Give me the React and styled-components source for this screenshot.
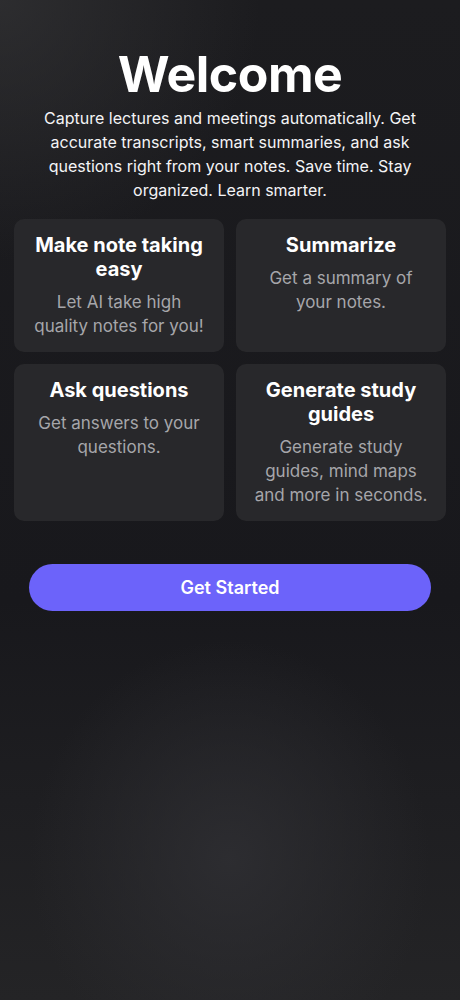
import React from 'react'
import styled, {createGlobalStyle} from 'styled-components'

const GlobalStyle = createGlobalStyle`
  html, body {
    margin: 0;
    padding: 0;
    background: #19191d;
  }
  body {
    font-family: Inter, "Noto Sans", "Liberation Sans", sans-serif;
    -webkit-font-smoothing: antialiased;
  }
`

const Screen = styled.div`
  min-height: 1000px;
  box-sizing: border-box;
  padding: 44px 14px 40px;
  display: flex;
  flex-direction: column;
  align-items: center;
  color: #fff;
  background:
    radial-gradient(ellipse 200px 220px at 230px 860px, rgba(46, 46, 50, 0.9) 0%, rgba(46, 46, 50, 0) 100%),
    radial-gradient(ellipse 260px 260px at 0px 0px, rgba(52, 52, 54, 0.7) 0%, rgba(52, 52, 54, 0) 100%),
    linear-gradient(to bottom, #1c1c1f 0%, #18181c 60%, #242426 100%);
`

const Title = styled.h1`
  margin: 0;
  font-size: 50px;
  line-height: 60px;
  font-weight: 700;
  letter-spacing: -0.5px;
`

const Intro = styled.p`
  margin: 2px 0 0;
  padding: 0 20px;
  font-size: 16px;
  line-height: 24px;
  text-align: center;
  color: #f4f4f6;
`

const Grid = styled.div`
  margin-top: 17px;
  width: 100%;
  display: grid;
  grid-template-columns: 1fr 1fr;
  gap: 12px;
`

const Card = styled.div`
  background: #28282b;
  border-radius: 10px;
  padding: 14px 16px;
  min-height: ${props => props.tall ? 157 : 133}px;
  box-sizing: border-box;
  text-align: center;
`

const CardTitle = styled.div`
  font-size: 20px;
  line-height: 24px;
  font-weight: 700;
  color: #fff;
  margin: 0 -6px;
`

const CardText = styled.div`
  margin-top: 9px;
  font-size: 17px;
  line-height: 24px;
  color: #a6a6aa;
`

const StartButton = styled.button`
  margin-top: 43px;
  width: 402px;
  height: 47px;
  border: none;
  border-radius: 24px;
  background: #6c63fa;
  color: #fff;
  font-family: inherit;
  font-size: 18px;
  font-weight: 600;
  cursor: pointer;
`

const features = [
  {title: 'Make note taking easy', text: 'Let AI take high quality notes for you!'},
  {title: 'Summarize', text: 'Get a summary of your notes.'},
  {title: 'Ask questions', text: 'Get answers to your questions.', tall: true},
  {title: 'Generate study guides', text: 'Generate study guides, mind maps and more in seconds.', tall: true}
]

export default function App () {
  return <Screen>
    <GlobalStyle />
    <Title>Welcome</Title>
    <Intro>
      Capture lectures and meetings automatically. Get accurate transcripts, smart summaries, and ask questions right from your notes. Save time. Stay organized. Learn smarter.
    </Intro>
    <Grid>
      {
        features.map(f => <Card key={f.title} tall={f.tall}>
          <CardTitle>{f.title}</CardTitle>
          <CardText>{f.text}</CardText>
        </Card>)
      }
    </Grid>
    <StartButton>Get Started</StartButton>
  </Screen>
}
